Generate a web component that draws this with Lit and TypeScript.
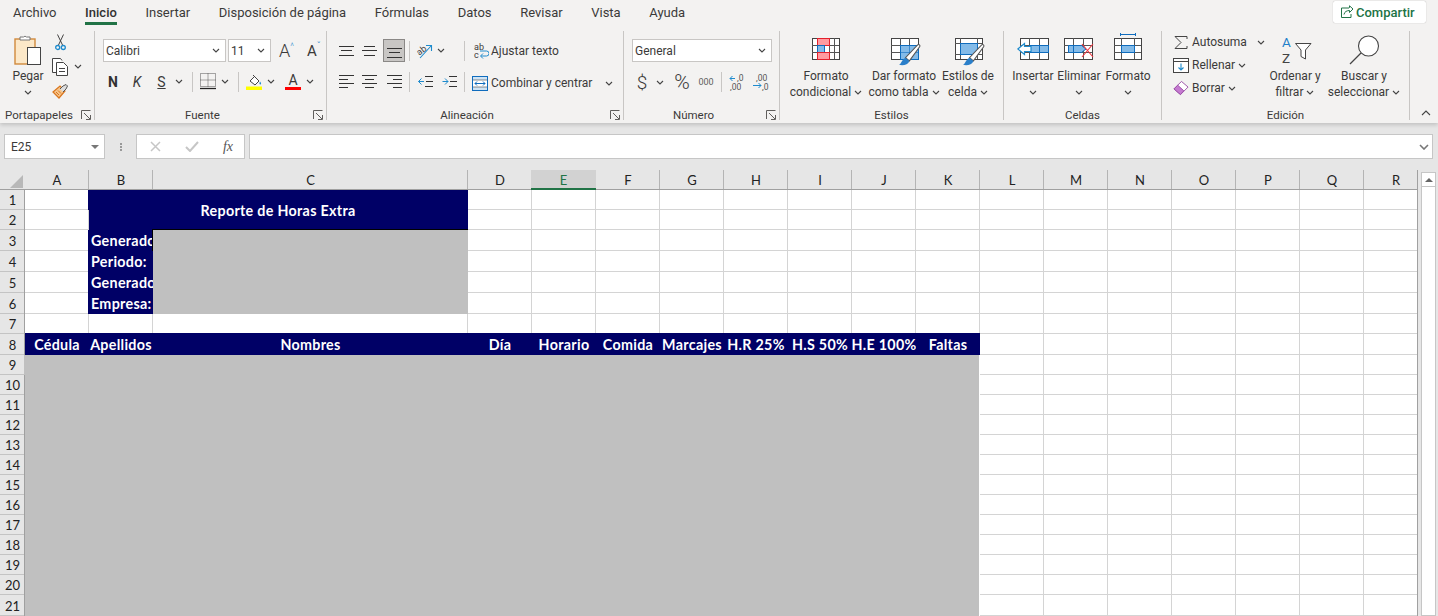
import { LitElement, html, css, svg } from "lit";
import { customElement } from "lit/decorators.js";

const chev = html`<svg class="chev" width="8" height="5" viewBox="0 0 8 5"><path d="M1 1l3 3 3-3" fill="none" stroke="#444" stroke-width="1.1"/></svg>`;
const launcher = html`<svg width="10" height="10" viewBox="0 0 10 10"><path d="M.5 9V.5H9.5M9.5 9.5H5M9.5 9.5V5M3 3l6 6" fill="none" stroke="#605e5c"/></svg>`;
const sep = html`<span class="vsep"></span>`;

const ico = (w: number, h: number, body: unknown) =>
  html`<svg width=${w} height=${h} viewBox="0 0 ${w} ${h}">${body}</svg>`;

const lines = (rows: number[][]) =>
  rows.map(([x1, x2, y, c]) => svg`<path d="M${x1} ${y + 0.5}H${x2}" stroke=${c ? "#1e8bcd" : "#333"} fill="none"/>`);

const paste = ico(28, 32, svg`
  <rect x="1" y="5" width="20" height="25" fill="#fce8c8" stroke="#d08a3c" stroke-width="1.4"/>
  <path d="M6 6V3h3.500a2 2 0 0 1 3 0H16v3z" fill="#fff" stroke="#777"/>
  <rect x="13.500" y="13.500" width="13" height="17" fill="#fff" stroke="#444"/>`);
const cut = ico(11, 17, svg`
  <path d="M2.500 .5L7.500 11M8.500 .5L3.500 11" stroke="#444" fill="none"/>
  <circle cx="2.700" cy="13.500" r="2" fill="none" stroke="#1e8bcd" stroke-width="1.300"/>
  <circle cx="8.300" cy="13.500" r="2" fill="none" stroke="#1e8bcd" stroke-width="1.300"/>`);
const copy = ico(17, 18, svg`
  <path d="M4.500 14.500H.5V.5H8.500L10 2.500" fill="#fff" stroke="#444"/>
  <path d="M4.500 4.500H11.500L15.500 8.500V17.500H4.500Z" fill="#fff" stroke="#444"/>
  <path d="M7 10.500H13M7 13.500H13" stroke="#444"/>`);
const painter = ico(17, 16, svg`
  <path d="M1 9L8 3L13 8L7 15Z" fill="#f6c48a" stroke="#d9761e" stroke-width="1.200"/>
  <path d="M8 6L11 3L14 1.500L15.500 3L14 6L11 9" fill="#ddd" stroke="#555"/>
  <path d="M4 9L7 12M6 7.500L9 10.500" stroke="#d9761e"/>`);
const borders = ico(16, 17, svg`
  <path d="M.5 .5H15.500V13.500H.5ZM8 .5V13.500M.5 7H15.500" fill="none" stroke="#555" stroke-dasharray="1 1"/>
  <path d="M0 15.500H16" stroke="#222" stroke-width="1.300"/>`);
const fillColor = ico(17, 16, svg`
  <path d="M4 7L8.500 2.500L13 7L9 11Z" fill="#fff" stroke="#444"/>
  <path d="M7 1L11 5" stroke="#444"/>
  <path d="M14 7.500c1.200 1.500 1.500 2.500 .5 3-1 .3-1.500-1-.5-3z" fill="#1e8bcd"/>
  <rect y="12.500" width="16" height="3.500" fill="#ffff00"/>`);
const top = ico(15, 10, lines([[0, 15, 0], [2, 13, 4], [0, 15, 9]]));
const mid = ico(15, 10, lines([[2, 13, 0], [0, 15, 4], [2, 13, 9]]));
const bottom = ico(15, 10, lines([[0, 15, 0], [2, 13, 4], [0, 15, 9]]));
const aLeft = ico(15, 13, lines([[0, 15, 0], [0, 9, 4], [0, 15, 8], [0, 9, 12]]));
const aCenter = ico(15, 13, lines([[0, 15, 0], [3, 12, 4], [0, 15, 8], [3, 12, 12]]));
const aRight = ico(15, 13, lines([[0, 15, 0], [6, 15, 4], [0, 15, 8], [6, 15, 12]]));
const indentL = ico(15, 13, svg`${lines([[7, 15, 1], [7, 15, 11], [8, 15, 6]])}
  <path d="M6 6.500H.5M3.500 3.500L.5 6.500L3.500 9.500" fill="none" stroke="#1e8bcd"/>`);
const indentR = ico(15, 13, svg`${lines([[7, 15, 1], [7, 15, 11], [8, 15, 6]])}
  <path d="M.5 6.500H6M3 3.500L6 6.500L3 9.500" fill="none" stroke="#1e8bcd"/>`);
const orient = ico(20, 18, svg`
  <text x="3" y="11" transform="rotate(-38 8 9)" font-family="Roboto, sans-serif" font-size="9" fill="#444">ab</text>
  <path d="M6 16L17 4M12 3.500H17.500V9" fill="none" stroke="#1e8bcd" stroke-width="1.100"/>`);
const wrap = html`<span class="wrapico"><b>ab</b><b>c</b>${ico(10, 9, svg`<path d="M1 1H7.500a2 2 0 0 1 0 5H2M4 3.500L1.500 6L4 8.500" fill="none" stroke="#1e8bcd"/>`)}</span>`;
const merge = ico(16, 15, svg`
  <rect x=".5" y=".5" width="15" height="14" fill="#cfe4f5" stroke="#0f6cbd"/>
  <rect x="1" y="4" width="14" height="7" fill="#fff"/>
  <path d="M3 7.500H13M5 5.500L3 7.500L5 9.500M11 5.500L13 7.500L11 9.500" fill="none" stroke="#0f6cbd"/>
  <path d="M1 4H15M1 11H15" stroke="#444" stroke-width=".6"/>`);
const decUp = ico(17, 17, svg`
  <path d="M6 4.500H1M3.500 2L1 4.500L3.500 7" fill="none" stroke="#1e8bcd"/>
  <text x="8" y="7" font-family="Roboto, sans-serif" font-size="8.500" fill="#555">,0</text>
  <text x="1" y="16" font-family="Roboto, sans-serif" font-size="8.500" fill="#555">,00</text>`);
const decDown = ico(17, 17, svg`
  <text x="4" y="7" font-family="Roboto, sans-serif" font-size="8.500" fill="#555">,00</text>
  <path d="M1 11.500H9M6.500 9L9 11.500L6.500 14" fill="none" stroke="#1e8bcd"/>
  <text x="10" y="16" font-family="Roboto, sans-serif" font-size="8.500" fill="#555">,0</text>`);

const tableLines = (x: number, y: number, w: number, h: number, xs: number[], ys: number[]) => svg`
  <rect x=${x + 0.5} y=${y + 0.5} width=${w} height=${h} fill="#fff" stroke="#444"/>
  ${xs.map((v) => svg`<path d="M${x + v + 0.5} ${y}v${h}" stroke="#555"/>`)}
  ${ys.map((v) => svg`<path d="M${x} ${y + v + 0.5}h${w}" stroke="#555"/>`)}`;

const brush = (dx: number, dy: number) => svg`<g transform="translate(${dx} ${dy}) scale(1.3)">
  <path d="M14 1C15 0 16.500 .5 16 2L8 13L5 10.500Z" fill="#fff" stroke="#555" stroke-width=".8"/>
  <path d="M5 10.500L8 13C7 16 3 17 0 16C2 15 2 12 5 10.500Z" fill="#2a7fc9"/></g>`;

const condFormat = ico(28, 23, svg`${tableLines(0, 0, 27, 21, [5, 12, 17, 22], [7, 14])}
  <rect x="5.500" y=".5" width="12" height="7" fill="#ff9ba0" stroke="#e3202c"/>
  <rect x="5.500" y="7.500" width="7" height="7" fill="#84bbe8" stroke="#0f6cbd"/>
  <rect x="5.500" y="14.500" width="12" height="7" fill="#ff9ba0" stroke="#e3202c"/>`);
const tableFormat = ico(35, 33, svg`<g transform="translate(4 0)">${tableLines(0, 5, 27, 21, [9, 18], [7, 14])}
  <rect x="9.500" y="12.500" width="18" height="14" fill="#84bbe8" stroke="#0f6cbd"/>
  <path d="M18.500 12v14M9 19.500h19" stroke="#0f6cbd" stroke-width=".6"/>${brush(8, 11)}</g>`);
const cellStyles = ico(35, 33, svg`<g transform="translate(4 0)">${tableLines(0, 5, 27, 21, [5, 22], [5, 16])}
  <rect x="5.500" y="10.500" width="17" height="11" fill="#84bbe8" stroke="#0f6cbd"/>${brush(8, 11)}</g>`);
const insertCells = ico(33, 23, svg`${tableLines(3, 0, 28, 21, [9, 19], [7, 14])}
  <rect x="12.500" y="7.500" width="19" height="7" fill="#84bbe8" stroke="#0f6cbd"/>
  <path d="M22.500 7v8" stroke="#0f6cbd"/>
  <path d="M.8 11L7.500 5.500V8.500H14V13.500H7.500V16.500Z" fill="#fff" stroke="#1e8bcd" stroke-width="1.200"/>`);
const deleteCells = ico(30, 23, svg`${tableLines(0, 0, 28, 21, [9, 19], [7, 14])}
  <path d="M4.500 7.500H17.500L22 11L17.500 14.500H4.500Z" fill="#84bbe8" stroke="#0f6cbd"/>
  <path d="M9.500 7v8" stroke="#0f6cbd"/>
  <path d="M18 6L29 19M29 6L18 19" stroke="#f0353f" stroke-width="1.100"/>`);
const formatCells = ico(28, 33, svg`
  <path d="M6.500 0v3M21.500 0v3M6.500 1.500h15" stroke="#0f6cbd" fill="none"/>
  ${tableLines(0, 5, 27, 21, [7, 20], [7, 14])}
  <rect x="7.500" y="12.500" width="13" height="7" fill="#84bbe8" stroke="#0f6cbd"/>`);
const sum = ico(14, 13, svg`<path d="M13 3V.5H1L7 6.500L1 12.500H13V10" fill="none" stroke="#444"/>`);
const fillDown = ico(16, 15, svg`
  <rect x=".5" y=".5" width="15" height="14" fill="#fff" stroke="#444"/>
  <path d="M1 3.500H15" stroke="#444"/>
  <path d="M8 5.500V12M5.500 9.500L8 12L10.500 9.500" fill="none" stroke="#1e8bcd" stroke-width="1.100"/>`);
const eraser = ico(17, 16, svg`
  <path d="M1 9L9 1L16 7L8 15Z" fill="#fff" stroke="#9b4fa8"/>
  <path d="M1 9L5 5L11.500 11L8 15Z" fill="#c57ad0" stroke="#9b4fa8"/>`);
const sortFilter = ico(33, 32, svg`
  <text x="3" y="13" font-family="Roboto, sans-serif" font-size="13.500" fill="#1e7fc9">A</text>
  <text x="3" y="29" font-family="Roboto, sans-serif" font-size="13.500" fill="#444">Z</text>
  <path d="M16.500 9.500H32L26.500 16V25L22 22.500V16Z" fill="#fff" stroke="#444"/>`);
const search = ico(31, 30, svg`
  <circle cx="19.500" cy="11" r="10" fill="#fff" stroke="#444" stroke-width="1.100"/>
  <path d="M12 18L1 29" stroke="#444" stroke-width="1.200"/>`);
const shareIco = ico(14, 14, svg`
  <path d="M9 3H1.500V12.500H11V9" fill="none" stroke="#217346"/>
  <path d="M4 9.500C4.500 6.500 7 5.500 9.500 5.500V7.500L13 4L9.500 .8V2.800" fill="none" stroke="#217346"/>`);

const COLS = "ABCDEFGHIJKLMNOPQR".split("");
const HEADINGS = ["Cédula", "Apellidos", "Nombres", "Día", "Horario", "Comida", "Marcajes", "H.R 25%", "H.S 50%", "H.E 100%", "Faltas"];
const META: Record<number, string> = { 3: "Generado", 4: "Periodo:", 5: "Generado", 6: "Empresa:" };

@customElement("app-root")
export class AppRoot extends LitElement {
  static styles = css`
    :host {
      display: block;
      width: 1438px;
      height: 616px;
      overflow: hidden;
      background: #e6e6e6;
      font-family: Roboto, "Noto Sans", sans-serif;
      font-size: 12px;
      color: #3b3a39;
    }
    svg { display: block; flex: none; }

    .ribbon { position: relative; height: 123px; background: #f3f2f1; box-shadow: 0 2px 4px rgba(0, 0, 0, .16); }
    .tabs { display: flex; align-items: flex-start; height: 31px; padding-left: 13px; gap: 28.600px; font-size: 13px; }
    .tab { height: 25px; box-sizing: border-box; padding-top: 3px; line-height: 19px; border-bottom: 3px solid transparent; }
    .tab.on { border-bottom-color: #217346; font-weight: 500; color: #323130; }
    .share {
      display: flex; align-items: center; gap: 2px;
      margin: 1px 12px 0 auto; width: 93px; height: 22px; box-sizing: border-box; padding-left: 7px;
      background: #fff; border-radius: 2px; box-shadow: 0 0 1px rgba(0, 0, 0, .35);
      color: #217346; font-weight: 500; font-size: 13px;
    }

    .groups { display: flex; height: 92px; }
    .group {
      display: flex; flex-direction: column; box-sizing: border-box; height: 92px;
      border-right: 1px solid #c8c6c4;
      border-image: linear-gradient(#c8c6c4 88px, transparent 88px) 1;
    }
    .g1 { width: 95px; } .g2 { width: 232px; } .g3 { width: 297px; } .g4 { width: 156px; }
    .g5 { width: 224px; } .g6 { width: 158px; } .g7 { width: 248px; }
    .body { height: 76px; display: flex; flex: none; }
    .label { display: flex; align-items: center; height: 16px; }
    .label span { flex: 1; text-align: center; font-size: 11.500px; }
    .label svg { margin: 0 3px 0 3px; }

    .big { display: flex; flex-direction: column; align-items: center; box-sizing: border-box; line-height: 16px; white-space: nowrap; text-align: center; }
    .bigicon { display: flex; align-items: center; justify-content: center; height: 33px; margin: 2px 0; }
    .ln { display: flex; align-items: center; justify-content: center; gap: 3px; height: 16px; }
    .w46 { width: 46px; } .w48 { width: 48px; } .w52 { width: 52px; } .w60 { width: 60px; }
    .w76 { width: 76px; } .w78 { width: 78px; } .w80 { width: 80px; }

    .clipLeft { padding-left: 4px; }
    .clipRight { display: flex; flex-direction: column; gap: 7px; padding-top: 3px; }
    .clipRow { display: flex; align-items: center; gap: 5px; height: 17px; }
    .clipRow.first { padding-left: 3px; }

    .stack { flex-direction: column; gap: 8px; padding-top: 8px; box-sizing: border-box; }
    .pad8 { padding-left: 8px; } .pad6 { padding-left: 6px; }
    .row { display: grid; align-items: center; justify-items: center; height: 23px; }
    .vsep { width: 1px; height: 20px; background: #c8c6c4; }
    .select {
      display: flex; align-items: center; justify-content: space-between; box-sizing: border-box;
      height: 23px; padding: 0 5px 0 2px; background: #fff; border: 1px solid #c8c6c4;
    }
    .font1 { display: flex; align-items: center; gap: 2px; margin-left: 2px; }
    .fname { width: 123px; } .fsize { width: 43px; } .fnum { width: 140px; }
    .grow { display: flex; align-items: baseline; margin-left: 6px; width: 26px; font-size: 18px; line-height: 20px; font-weight: 300; }
    .shrink { display: flex; align-items: baseline; margin-left: 0; font-size: 15px; line-height: 20px; }
    .grow i, .shrink i { font-style: normal; font-size: 9px; color: #1e8bcd; align-self: flex-start; line-height: 10px; }
    .font2 { grid-template-columns: 24px 24px 25px 10px 16px 16px 18px 8px 24px 10px 5px 24px 10px; }
    .n { font-weight: 700; font-size: 14px; color: #323130; }
    .k { font-style: italic; font-size: 14px; }
    .s { font-size: 14px; text-decoration: underline; }
    .fontA { display: flex; flex-direction: column; align-items: center; font-size: 14px; line-height: 13px; }
    .fontA::after { content: ""; width: 16px; height: 3px; background: #f00; }

    .al1 { grid-template-columns: 23px 23px 26px 4px 26px 8px 14px 10px auto; margin-left: 8px; }
    .al2 { grid-template-columns: 23px 23px 26px 4px 28px 20px 10px auto; margin-left: 8px; }
    .sel { display: flex; align-items: flex-end; justify-content: center; box-sizing: border-box; width: 22px; height: 23px; padding-bottom: 3px; background: #c8c6c4; border: 1px solid #8a8886; }
    .wide { display: flex; align-items: center; gap: 3px; margin-left: 3px; justify-self: start; white-space: nowrap; }
    .al2 .wide { padding-top: 3px; }
    .wide em { font-style: normal; width: 111px; }
    .wrapico { position: relative; display: block; width: 16px; height: 16px; font-size: 9px; line-height: 8px; padding-left: 2px; box-sizing: border-box; }
    .wrapico b { display: block; font-weight: 400; }
    .wrapico svg { position: absolute; right: -1px; bottom: 0; }

    .num2 { grid-template-columns: 20px 16px 28px 20px 10px 22px 24px; }
    .dollar { font-size: 19px; font-weight: 300; }
    .pct { font-size: 21px; font-weight: 300; }
    .th { font-size: 9px; color: #605e5c; }

    .pad5 { padding-left: 8px; }
    .pad7 { padding-left: 11px; }
    .editCol { display: flex; flex-direction: column; gap: 1px; width: 92px; }
    .editRow { display: flex; align-items: center; gap: 3px; height: 22px; white-space: nowrap; }
    .editRow svg:first-child { width: 16px; }
    .editRow .wideText { width: 65px; }
    .collapse { align-self: flex-end; margin: 0 0 7px 11px; }

    .fbar { display: flex; height: 47px; box-sizing: border-box; padding: 11px 5px 11px 4px; }
    .box { box-sizing: border-box; height: 25px; background: #fff; border: 1px solid #c6c6c6; }
    .namebox { display: flex; align-items: center; justify-content: space-between; width: 101px; padding: 0 5px 0 6px; font-size: 12px; }
    .tri { width: 0; height: 0; border: 4px solid transparent; border-top: 4px solid #777; border-bottom: 0; }
    .dots { display: flex; align-items: center; justify-content: center; width: 31px; height: 25px; }
    .dots i { width: 2px; height: 8px; background: repeating-linear-gradient(#999 0 2px, transparent 2px 3px); }
    .fx { display: grid; grid-template-columns: 37px 36px 36px; align-items: center; justify-items: center; width: 109px; padding-left: 0; }
    .fxt { font-family: "Liberation Serif", serif; font-style: italic; font-size: 14px; color: #555; }
    .finput { flex: 1; display: flex; align-items: center; justify-content: flex-end; margin-left: 4px; padding-right: 3px; }

    .sheetwrap { display: flex; height: 446px; }
    .sheet { width: 1418px; box-sizing: border-box; border-right: 1px solid #a0a0a0; overflow: hidden; background: #fff; }
    .grid {
      display: grid;
      width: 1428px;
      grid-template-columns: 25px 64px 64px 315px repeat(15, 64px);
      grid-template-rows: 20px 20px 20px 21px 21px 21px 21px 20px 21px repeat(12, 20px) 21px;
      font-family: Lato, "Liberation Sans", sans-serif;
    }
    .corner { background: #e6e6e6; box-shadow: inset 0 -1px #a0a0a0; display: flex; align-items: flex-end; justify-content: flex-end; padding: 0 2px 2px 0; }
    .corner::after { content: ""; border-left: 13px solid transparent; border-bottom: 13px solid #b8b8b8; }
    .ch {
      display: flex; align-items: center; justify-content: center; font-size: 13px; color: #222;
      background: #e6e6e6; box-sizing: border-box; box-shadow: inset 0 -1px #a0a0a0, inset -1px 0 #b4b4b4;
    }
    .ch.cur { margin-left: -1px; background: #d2d2d2; color: #217346; box-shadow: inset 0 -2px #217346; }
    .rh {
      display: flex; align-items: center; justify-content: center; font-size: 13px; color: #222;
      background: #e6e6e6; box-shadow: inset -1px 0 #a0a0a0, inset 0 -1px #c4c4c4;
    }
    .c { box-sizing: border-box; background: #fff; border-right: 1px solid #d4d4d4; border-bottom: 1px solid #d4d4d4; }
    .navy { background: #000066; color: #fff; font-weight: 700; font-size: 14.300px; letter-spacing: .3px; white-space: nowrap; overflow: hidden; border: 0; }
    .title { grid-column: span 2; grid-row: span 2; display: flex; align-items: center; justify-content: center; margin-left: -1px; }
    .meta { display: flex; align-items: center; padding-left: 3px; margin-left: -1px; }
    .head { display: flex; align-items: center; justify-content: center; margin-top: -1px; }
    .grey { grid-row: span 4; background: #c0c0c0; border: 0; border-top: 1px solid #000; border-left: 1px solid #000; margin-top: -1px; margin-left: -1px; }
    .block { grid-column: span 11; grid-row: span 13; background: #c0c0c0; border: 0; margin: 0 1px 0 -1px; }

    .vscroll { display: flex; flex-direction: column; margin: 2px 0 0 3px; width: 15px; }
    .up { display: flex; align-items: center; justify-content: center; box-sizing: border-box; height: 15px; background: #fff; border: 1px solid #c6c6c6; }
    .up::after { content: ""; border: 4px solid transparent; border-bottom: 4px solid #666; border-top: 0; }
    .track { flex: 1; background: #fff; border: 1px solid #c6c6c6; border-top: 0; }
  `;

  private big(icon: unknown, l1: string, l2: string, cls: string) {
    return html`<div class="big ${cls}">
      <div class="bigicon">${icon}</div>
      <div class="ln">${l1}</div>
      <div class="ln">${l2}${l2 ? " " : ""}${chev}</div>
    </div>`;
  }

  private renderCells(r: number) {
    const out: unknown[] = [html`<div class="rh">${r}</div>`];
    COLS.forEach((col, i) => {
      if (r === 1 && col === "B") out.push(html`<div class="c navy title">Reporte de Horas Extra</div>`);
      else if (r <= 2 && (col === "B" || col === "C")) return;
      else if (META[r] && col === "B") out.push(html`<div class="c navy meta">${META[r]}</div>`);
      else if (r === 3 && col === "C") out.push(html`<div class="c grey"></div>`);
      else if (r > 3 && r < 7 && col === "C") return;
      else if (r === 8 && i < 11) out.push(html`<div class="c navy head">${HEADINGS[i]}</div>`);
      else if (r === 9 && i === 0) out.push(html`<div class="c block"></div>`);
      else if (r >= 9 && i < 11) return;
      else out.push(html`<div class="c"></div>`);
    });
    return out;
  }

  render() {
    const rows = Array.from({ length: 21 }, (_, i) => i + 1);
    return html`
      <div class="ribbon">
        <div class="tabs">
          <div class="tab">Archivo</div>
          <div class="tab on">Inicio</div>
          <div class="tab">Insertar</div>
          <div class="tab">Disposición de página</div>
          <div class="tab">Fórmulas</div>
          <div class="tab">Datos</div>
          <div class="tab">Revisar</div>
          <div class="tab">Vista</div>
          <div class="tab">Ayuda</div>
          <div class="share">${shareIco}Compartir</div>
        </div>
        <div class="groups">
          <div class="group g1">
            <div class="body">
              <div class="clipLeft">${this.big(paste, "Pegar", "", "w48")}</div>
              <div class="clipRight">
                <div class="clipRow first">${cut}</div>
                <div class="clipRow">${copy}${chev}</div>
                <div class="clipRow">${painter}</div>
              </div>
            </div>
            <div class="label"><span>Portapapeles</span>${launcher}</div>
          </div>

          <div class="group g2">
            <div class="body stack pad6">
              <div class="font1">
                <div class="select fname">Calibri${chev}</div>
                <div class="select fsize">11${chev}</div>
                <div class="grow">A<i>^</i></div>
                <div class="shrink">A<i>ˇ</i></div>
              </div>
              <div class="row font2">
                <span class="n">N</span><span class="k">K</span><span class="s">S</span>${chev}${sep}${borders}${chev}${sep}${fillColor}${chev}<i></i><span class="fontA">A</span>${chev}
              </div>
            </div>
            <div class="label"><span>Fuente</span>${launcher}</div>
          </div>

          <div class="group g3">
            <div class="body stack">
              <div class="row al1">
                ${top}${mid}<span class="sel">${bottom}</span><span class="vsep"></span>${orient}${chev}<i></i>${sep}
                <div class="wide">${wrap}Ajustar texto</div>
              </div>
              <div class="row al2">
                ${aLeft}${aCenter}${aRight}<span class="vsep"></span>${indentL}${indentR}${sep}
                <div class="wide">${merge}<em>Combinar y centrar</em>${chev}</div>
              </div>
            </div>
            <div class="label"><span>Alineación</span>${launcher}</div>
          </div>

          <div class="group g4">
            <div class="body stack pad8">
              <div class="select fnum">General${chev}</div>
              <div class="row num2">
                <span class="dollar">$</span>${chev}<span class="pct">%</span><span class="th">000</span>${sep}${decUp}${decDown}
              </div>
            </div>
            <div class="label"><span>Número</span>${launcher}</div>
          </div>

          <div class="group g5">
            <div class="body pad5">
              ${this.big(condFormat, "Formato", "condicional", "w76")}
              ${this.big(tableFormat, "Dar formato", "como tabla", "w80")}
              ${this.big(cellStyles, "Estilos de", "celda", "w48")}
            </div>
            <div class="label"><span>Estilos</span></div>
          </div>

          <div class="group g6">
            <div class="body pad6">
              ${this.big(insertCells, "Insertar", "", "w46")}
              ${this.big(deleteCells, "Eliminar", "", "w46")}
              ${this.big(formatCells, "Formato", "", "w52")}
            </div>
            <div class="label"><span>Celdas</span></div>
          </div>

          <div class="group g7">
            <div class="body pad7">
              <div class="editCol">
                <div class="editRow">${sum}<span class="wideText">Autosuma</span>${chev}</div>
                <div class="editRow">${fillDown}Rellenar ${chev}</div>
                <div class="editRow">${eraser}Borrar ${chev}</div>
              </div>
              ${this.big(sortFilter, "Ordenar y", "filtrar", "w60")}
              ${this.big(search, "Buscar y", "seleccionar", "w78")}
            </div>
            <div class="label"><span>Edición</span></div>
          </div>
          <div class="collapse">
            <svg width="10" height="6" viewBox="0 0 10 6"><path d="M1 5l4-4 4 4" fill="none" stroke="#444" stroke-width="1.100"/></svg>
          </div>
        </div>
      </div>

      <div class="fbar">
        <div class="box namebox">E25<span class="tri"></span></div>
        <div class="dots"><i></i></div>
        <div class="box fx">
          <svg width="11" height="11" viewBox="0 0 11 11"><path d="M1 1l9 9M10 1l-9 9" stroke="#c6c6c6" stroke-width="1.500"/></svg>
          <svg width="14" height="11" viewBox="0 0 14 11"><path d="M1 6l4 4 8-9" fill="none" stroke="#c6c6c6" stroke-width="2"/></svg>
          <span class="fxt">fx</span>
        </div>
        <div class="box finput">
          <svg width="10" height="6" viewBox="0 0 10 6"><path d="M1 1l4 4 4-4" fill="none" stroke="#777" stroke-width="1.600"/></svg>
        </div>
      </div>

      <div class="sheetwrap">
        <div class="sheet">
          <div class="grid">
            <div class="corner"></div>
            ${COLS.map((c) => html`<div class="ch ${c === "E" ? "cur" : ""}">${c}</div>`)}
            ${rows.map((r) => this.renderCells(r))}
          </div>
        </div>
        <div class="vscroll"><div class="up"></div><div class="track"></div></div>
      </div>
    `;
  }
}
